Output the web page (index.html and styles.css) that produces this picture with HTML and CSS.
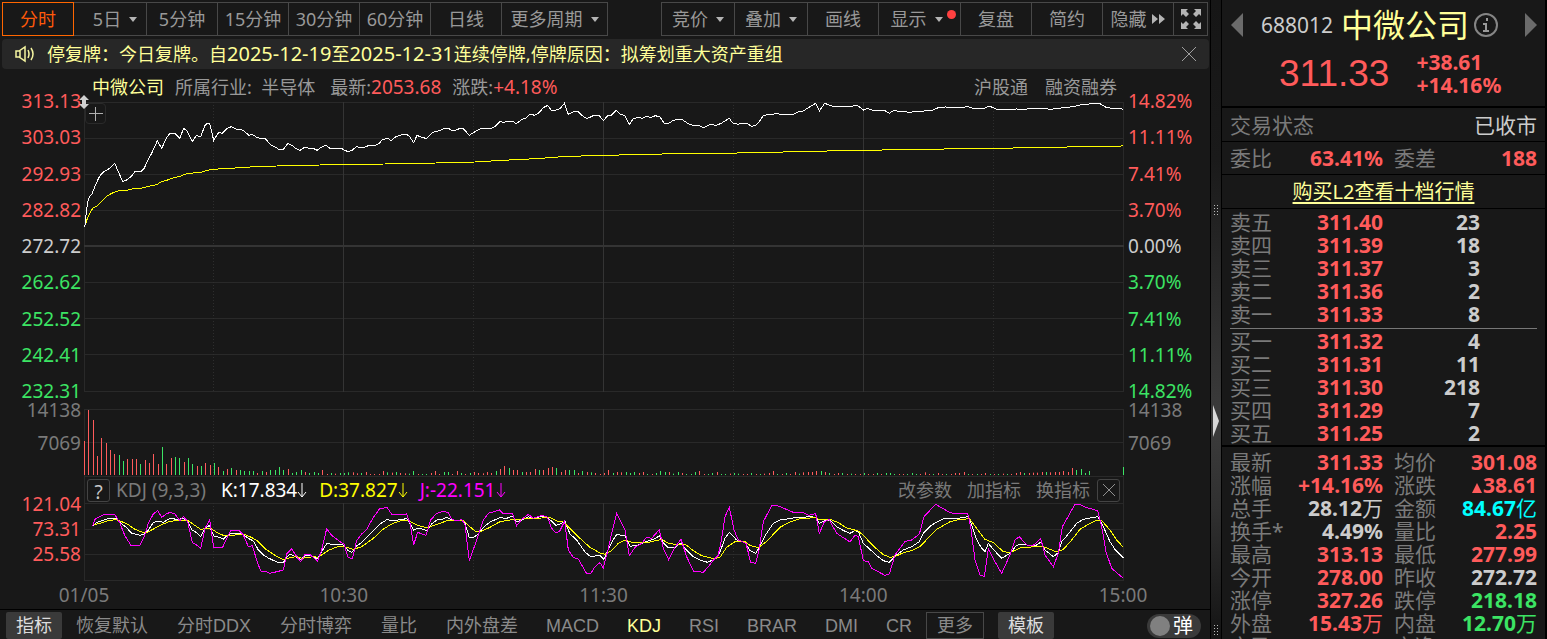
FILE: index.html
```html
<!DOCTYPE html>
<html lang="zh-CN">
<head>
<meta charset="utf-8">
<title>中微公司 688012 分时</title>
<link rel="stylesheet" href="styles.css">
</head>
<body>
<main class="main">
  <nav class="toolbar">
    <div class="group">
      <button class="btn active">分时</button>
      <button class="btn mid days">5日<i class="caret"></i></button>
      <button class="btn">5分钟</button>
      <button class="btn">15分钟</button>
      <button class="btn">30分钟</button>
      <button class="btn">60分钟</button>
      <button class="btn">日线</button>
      <button class="btn wide">更多周期<i class="caret"></i></button>
    </div>
    <div class="group">
      <button class="btn mid">竞价<i class="caret"></i></button>
      <button class="btn mid">叠加<i class="caret"></i></button>
      <button class="btn">画线</button>
      <button class="btn show">显示<i class="caret"></i><i class="dot"></i></button>
      <button class="btn">复盘</button>
      <button class="btn">简约</button>
      <button class="btn hide">隐藏<svg width="14" height="12" viewBox="0 0 14 12"><path d="M0 1l6 5-6 5zM7 1l6 5-6 5z" fill="#b4b4b4"/></svg></button>
      <button class="btn full" aria-label="全屏"><svg width="22" height="22" viewBox="0 0 22 22"><g fill="#b4b4b4"><path d="M1 1h7L6 3l3 3-3 3-3-3-2 2z"/><path d="M21 1v7l-2-2-3 3-3-3 3-3-2-2z"/><path d="M1 21v-7l2 2 3-3 3 3-3 3 2 2z"/><path d="M21 21h-7l2-2-3-3 3-3 3 3 2-2z"/></g></svg></button>
    </div>
  </nav>

  <div class="notice">
    <svg width="20" height="18" viewBox="0 0 20 18" fill="none" stroke="#f5f5a0" stroke-width="1.500"><path d="M1 6h3l6-4v14l-6-4H1zM5 6v6M13 5q2 4 0 8M16 3q4 6 0 12"/></svg>
    <span class="notice-text">停复牌：今日复牌。自<span class="date">2025-12-19</span>至<span class="date">2025-12-31</span>连续停牌,停牌原因：拟筹划重大资产重组</span>
    <button class="plain" aria-label="关闭"><svg width="16" height="16" viewBox="0 0 16 16" stroke="#a0a0a0"><path d="M1 1l14 14M15 1L1 15"/></svg></button>
  </div>

  <div class="info">
    <span class="yellow">中微公司</span>
    <span>所属行业:&nbsp; 半导体</span>
    <span>最新:<b class="red">2053.68</b></span>
    <span>涨跌:<b class="red">+4.18%</b></span>
    <span class="push">沪股通</span>
    <span class="margin-tag">融资融券</span>
  </div>

  <section class="charts">
    <div class="pane">
      <div class="axis left">
        <span class="red">313.13</span><span class="red">303.03</span><span class="red">292.93</span><span class="red">282.82</span><span class="flat">272.72</span><span class="green">262.62</span><span class="green">252.52</span><span class="green">242.41</span><span class="green">232.31</span>
      </div>
      <div class="plot">
        <svg id="price" viewBox="0 0 3120 870" preserveAspectRatio="none"></svg>
        <button class="add" aria-label="添加"><svg width="14" height="14" viewBox="0 0 14 14" stroke="#b0b0b0"><path d="M6.500 0v14M0 6.500h14"/></svg></button>
        <svg class="handle" width="10" height="14" viewBox="0 0 10 14"><path d="M5 0l5 5H7v4h3l-5 5-5-5h3V5H0z" fill="#d0d0d0"/></svg>
      </div>
      <div class="axis right">
        <span class="red">14.82%</span><span class="red">11.11%</span><span class="red">7.41%</span><span class="red">3.70%</span><span class="flat">0.00%</span><span class="green">3.70%</span><span class="green">7.41%</span><span class="green">11.11%</span><span class="green">14.82%</span>
      </div>
    </div>
    <div></div>
    <div class="pane">
      <div class="axis left volume-axis"><span>14138</span><span>7069</span></div>
      <div class="plot"><svg id="volume" viewBox="0 0 3120 204" preserveAspectRatio="none"></svg></div>
      <div class="axis right volume-axis"><span>14138</span><span>7069</span></div>
    </div>
    <div class="kdj-head">
      <button class="box help">?</button>
      <span class="kdj-name">KDJ (9,3,3)</span>
      <span class="k">K:17.834<svg width="10" height="16" viewBox="0 0 10 16"><path d="M5 1v14M1 10l4 5 4-5"/></svg></span>
      <span class="d">D:37.827<svg width="10" height="16" viewBox="0 0 10 16"><path d="M5 1v14M1 10l4 5 4-5"/></svg></span>
      <span class="j">J:-22.151<svg width="10" height="16" viewBox="0 0 10 16"><path d="M5 1v14M1 10l4 5 4-5"/></svg></span>
      <div class="kdj-tools">
        <button class="plain">改参数</button>
        <button class="plain">加指标</button>
        <button class="plain">换指标</button>
        <button class="box" aria-label="关闭指标"><svg width="12" height="12" viewBox="0 0 12 12" stroke="#909090"><path d="M0 0l12 12M12 0L0 12"/></svg></button>
      </div>
    </div>
    <div class="pane">
      <div class="axis left kdj-axis"><span class="red">121.04</span><span class="red">73.31</span><span class="red">25.58</span></div>
      <div class="plot"><svg id="kdj" viewBox="0 0 3120 234" preserveAspectRatio="none"></svg></div>
      <div></div>
    </div>
  </section>

  <div class="times"><span>01/05</span><span>10:30</span><span>11:30</span><span>14:00</span><span>15:00</span></div>

  <nav class="tabs">
    <button class="tab filled">指标</button>
    <button class="tab first">恢复默认</button>
    <button class="tab">分时DDX</button>
    <button class="tab">分时博弈</button>
    <button class="tab">量比</button>
    <button class="tab">内外盘差</button>
    <button class="tab latin">MACD</button>
    <button class="tab latin current">KDJ</button>
    <button class="tab latin">RSI</button>
    <button class="tab latin">BRAR</button>
    <button class="tab latin">DMI</button>
    <button class="tab latin">CR</button>
    <button class="tab outlined">更多</button>
    <button class="tab filled template">模板</button>
    <label class="toggle"><input type="checkbox">弹</label>
  </nav>
</main>

<div class="splitter">
  <i class="grip"></i>
  <svg class="collapse" width="6" height="32" viewBox="0 0 6 32"><path d="M0 0l6 16-6 16z" fill="#d8d8d8"/></svg>
  <i class="grip low"></i>
</div>

<aside class="side">
  <header class="head">
    <div class="title">
      <button class="plain" aria-label="上一个"><svg width="12" height="24" viewBox="0 0 12 24"><path d="M12 0v24L0 12z" fill="#6b6b6b"/></svg></button>
      <span class="code">688012</span>
      <h1 class="name">中微公司</h1>
      <svg width="26" height="26" viewBox="0 0 26 26"><circle cx="13" cy="13" r="11" fill="none" stroke="#858585" stroke-width="2"/><g fill="none" stroke="#999" stroke-width="2"><path d="M14 6v3M10 12h3v6M10 19h6"/></g></svg>
      <button class="plain next" aria-label="下一个"><svg width="12" height="24" viewBox="0 0 12 24"><path d="M0 0l12 12L0 24z" fill="#6b6b6b"/></svg></button>
    </div>
    <div class="quote red">
      <span class="last">311.33</span>
      <span class="change">+38.61<br>+14.16%</span>
    </div>
  </header>
  <div class="line status"><span>交易状态</span><span class="flat">已收市</span></div>
  <div class="line ratio"><span>委比</span><b class="red">63.41%</b><span class="second">委差</span><b class="red">188</b></div>
  <div class="line link"><a href="#l2">购买L2查看十档行情</a></div>
  <div class="book">
    <table>
      <tr><th>卖五</th><td class="red">311.40</td><td>23</td><td></td></tr>
      <tr><th>卖四</th><td class="red">311.39</td><td>18</td><td></td></tr>
      <tr><th>卖三</th><td class="red">311.37</td><td>3</td><td></td></tr>
      <tr><th>卖二</th><td class="red">311.36</td><td>2</td><td></td></tr>
      <tr><th>卖一</th><td class="red">311.33</td><td>8</td><td></td></tr>
    </table>
    <hr>
    <table>
      <tr><th>买一</th><td class="red">311.32</td><td>4</td><td></td></tr>
      <tr><th>买二</th><td class="red">311.31</td><td>11</td><td></td></tr>
      <tr><th>买三</th><td class="red">311.30</td><td>218</td><td></td></tr>
      <tr><th>买四</th><td class="red">311.29</td><td>7</td><td></td></tr>
      <tr><th>买五</th><td class="red">311.25</td><td>2</td><td></td></tr>
    </table>
  </div>
  <div class="stats">
    <table>
      <tr><th>最新</th><td class="red">311.33</td><th>均价</th><td class="red">301.08</td></tr>
      <tr><th>涨幅</th><td class="red">+14.16%</td><th>涨跌</th><td class="red"><i class="up"></i>38.61</td></tr>
      <tr><th>总手</th><td>28.12<span>万</span></td><th>金额</th><td class="cyan">84.67<span>亿</span></td></tr>
      <tr><th>换手*</th><td>4.49%</td><th>量比</th><td class="red">2.25</td></tr>
      <tr><th>最高</th><td class="red">313.13</td><th>最低</th><td class="red">277.99</td></tr>
      <tr><th>今开</th><td class="red">278.00</td><th>昨收</th><td>272.72</td></tr>
      <tr><th>涨停</th><td class="red">327.26</td><th>跌停</th><td class="green">218.18</td></tr>
      <tr><th>外盘</th><td class="red">15.43<span>万</span></td><th>内盘</th><td class="green">12.70<span>万</span></td></tr>
      <tr><th>市盈</th><td></td><th>市净</th><td></td></tr>
    </table>
  </div>
</aside>
<script src="charts.js"></script>
</body>
</html>
```
FILE: styles.css
```css
* { box-sizing: border-box; }
body {
  margin: 0;
  height: 100vh;
  overflow: hidden;
  display: grid;
  grid-template-columns: minmax(0, 1fr) 12px 325px;
  background: #181818;
  color: #999;
  font: 18px/24px "Noto Sans", "Noto Sans CJK SC", sans-serif;
  white-space: nowrap;
}
button {
  margin: 0;
  padding: 0;
  background: none;
  border: 0;
  color: inherit;
  font: inherit;
  white-space: nowrap;
}
svg { display: block; flex: none; }
b { font-weight: 400; }
.red { color: #ff5b5b; }
.green { color: #3ce464; }
.flat { color: #ccc; }
.cyan { color: #00ffff; }
.yellow { color: #ffff99; }

.main { display: flex; flex-direction: column; min-width: 0; height: 100vh; }
.toolbar { display: flex; justify-content: space-between; padding: 2px 2px 3px; }
.group { display: flex; }
.btn {
  display: flex;
  align-items: center;
  justify-content: center;
  gap: 8px;
  width: 72px;
  height: 34px;
  border: 1px solid #484848;
}
.btn + .btn { margin-left: -1px; }
.btn.active { position: relative; border-color: #f60; color: #ff5a0a; }
.mid { width: 74px; }
.days { padding-left: 10px; }
.wide { width: 107px; }
.show { position: relative; width: 83px; padding-right: 6px; }
.hide { gap: 5px; }
.full { width: 35px; }
.caret { border: 4px solid transparent; border-top: 5px solid #b4b4b4; border-bottom: 0; }
.dot { position: absolute; top: 7px; right: 4px; width: 9px; height: 9px; border-radius: 50%; background: #ff4040; }

.notice {
  display: flex;
  align-items: center;
  gap: 12px;
  height: 30px;
  margin: 0 1px 0 2px;
  padding: 0 12px 0 13px;
  border-radius: 4px;
  background: #272727;
  color: #ffff99;
}
.notice-text { flex: 1; }
.date { font-size: 20px; }

.info { display: flex; align-items: center; height: 33px; padding: 2px 93px 0 92px; gap: 11px; }
.info b { font-size: 19px; }
.info span:nth-child(3) { margin-left: 4px; }
.info .push { margin-left: auto; }
.margin-tag { margin-left: 6px; }

.charts { flex: 1; min-height: 0; display: grid; grid-template-rows: 290fr 17px 68fr 26px 78fr; }
.pane { display: grid; grid-template-columns: 84px minmax(0, 1fr) 87px; min-height: 0; }
.plot { position: relative; min-height: 0; margin-right: -1px; }
.plot > svg:first-child { position: absolute; inset: 0; width: 100%; height: 100%; }
.axis {
  display: flex;
  flex-direction: column;
  justify-content: space-between;
  margin: -12px 0 -11px;
  font-size: 19px;
}
.pane:first-child .axis { margin: -13px 0 -11px; }
.left { align-items: flex-end; padding-right: 3px; }
.right { padding-left: 5px; }
.pane .volume-axis { justify-content: flex-start; gap: 9px; margin-top: -11px; color: #7a7a7a; }
.pane .kdj-axis { justify-content: flex-start; gap: 1px; margin-top: -11px; }
.add {
  position: absolute;
  left: 1px;
  top: 1px;
  display: grid;
  place-items: center;
  width: 21px;
  height: 21px;
  border: 1px solid #2a2a2a;
  border-radius: 4px;
}
.handle { position: absolute; left: -5px; top: -7px; }

.kdj-head {
  display: flex;
  align-items: center;
  margin: 0 86px 0 84px;
  padding: 0 3px;
  border: solid #292929;
  border-width: 0 1px;
  color: #7a7a7a;
  font-size: 19px;
}
.box {
  display: grid;
  place-items: center;
  width: 23px;
  height: 23px;
  border: 1px solid #444;
  border-radius: 3px;
}
.help { color: #c8c8c8; margin-left: -1px; }
.kdj-name { margin: 0 15px 0 6px; }
.k, .d, .j { display: flex; align-items: center; margin-right: 12px; }
.k { color: #fff; }
.d { color: #ff0; }
.j { color: #f0f; }
.kdj-head span svg { fill: none; stroke: currentColor; }
.kdj-tools { display: flex; align-items: center; gap: 15px; margin-left: auto; font-size: 18px; }
.kdj-tools .box { margin-left: -8px; }

.times {
  display: flex;
  justify-content: space-between;
  height: 28px;
  margin: 0 57px 0 54px;
  font-size: 19px;
  line-height: 28px;
  color: #7a7a7a;
}
.times span { width: 60px; text-align: center; }

.tabs {
  display: flex;
  align-items: center;
  height: 30px;
  padding: 2px 9px 0 6px;
  border-top: 1px solid #000;
  font-family: "Liberation Sans", "Noto Sans CJK SC", sans-serif;
  color: #8a8a8a;
}
.tab { height: 27px; padding: 0 14px 0 15px; }
.first, .latin { padding: 0 14px; }
.filled, .outlined { padding: 0 10px; }
.filled { background: #3a3a3a; color: #ddd; border-radius: 2px; }
.outlined { border: 1px solid #484848; }
.template { margin-left: 14px; }
.current { color: #ffff99; }
.toggle {
  display: flex;
  align-items: center;
  gap: 3px;
  height: 24px;
  width: 54px;
  margin-left: auto;
  padding-left: 3px;
  border-radius: 12px;
  background: #3a3a3a;
  color: #fff;
  font-size: 20px;
}
.toggle input { appearance: none; width: 20px; height: 20px; margin: 0; border-radius: 50%; background: #808080; }

.splitter {
  position: relative;
  border: solid #000;
  border-width: 0 1px;
  background: linear-gradient(#161616, #1a1a1a 25%, #3c3c3c 66%, #303030 80%, #141414);
}
.grip {
  position: absolute;
  left: 2px;
  top: 204px;
  width: 6px;
  height: 12px;
  background: radial-gradient(circle, #bbb 1px, transparent 1px) 0 0 / 3px 3px;
}
.low { top: auto; bottom: 3px; }
.collapse { position: absolute; left: 2px; top: 405px; }

.side { height: 100vh; overflow: hidden; border-right: 2px solid #000; font-size: 21px; color: #7a7a7a; }
.head { padding: 4px 8px 4px 9px; border-bottom: 2px solid #000; }
.title { display: flex; align-items: center; height: 42px; }
.code { margin: 0 8px 0 18px; color: #ccc; }
.name { margin: 0 4px 0 0; font-size: 32px; line-height: 42px; font-weight: 400; color: #ffff99; }
.next { margin-left: auto; }
.quote { display: flex; align-items: center; height: 56px; padding-left: 48px; gap: 27px; }
.last { font-family: "Liberation Sans", sans-serif; font-size: 37px; line-height: 42px; }
.change { font-weight: 700; line-height: 23px; }
.line { display: flex; align-items: center; justify-content: space-between; padding: 0 8px; border-bottom: 1px solid #000; }
.status { height: 34px; }
.ratio { height: 33px; display: grid; grid-template-columns: 60px 93px 69px 1fr; }
.ratio b { font-weight: 700; text-align: right; }
.second { padding-left: 11px; }
.link { height: 34px; justify-content: center; font-size: 20px; }
.link a { color: #ffff99; text-underline-offset: 3px; }
.book { padding: 2px 8px 0; border-bottom: 2px solid #000; }
.book hr { margin: 2px 0 1px; border: 0; border-top: 1px solid #777; }
.stats { padding: 4px 8px 0; }
table { width: 100%; border-collapse: collapse; table-layout: fixed; line-height: 23px; }
th { width: 60px; padding: 0; text-align: left; font-weight: 400; }
td { padding: 0; height: 23px; text-align: right; font-weight: 700; color: #ccc; }
td:nth-child(2) { width: 93px; }
.book td:nth-child(3) { width: 97px; }
.stats th:nth-child(3) { width: 64px; padding-left: 11px; }
td span { font-weight: 400; }
td.red { color: #ff5b5b; }
td.green { color: #3ce464; }
td.cyan { color: #00ffff; }
.up { display: inline-block; border: 5px solid transparent; border-top: 0; border-bottom: 10px solid #ff5b5b; margin-right: 1px; }

.grid, .grid-v, .grid-dot, .grid-zero, .curve { fill: none; shape-rendering: crispEdges; vector-effect: non-scaling-stroke; stroke-width: 1px; }
.grid { stroke: #292929; }
.grid-v { stroke: #343434; }
.grid-dot { stroke: #2e2e2e; stroke-dasharray: 1 2; }
.grid-zero { stroke: #343434; stroke-width: 2px; }
.white { stroke: #fff; }
.avg { stroke: #ff0; }
.magenta { stroke: #f0f; }
.bar-up { fill: #ff5b5b; }
.bar-down { fill: #3ce464; }
```
FILE: charts.js
```js
// Every plot uses units of one third of a pixel: 13 units per traded minute.
const NS = "http://www.w3.org/2000/svg";

function add(svg, name, cls, attrs) {
  const el = document.createElementNS(NS, name);
  el.setAttribute("class", cls);
  for (const key in attrs) el.setAttribute(key, attrs[key]);
  svg.appendChild(el);
}

function drawGrid(svg, height, rows) {
  rows.forEach(y => add(svg, "path", "grid", { d: `M0 ${y}H3120` }));
  [1.5, 3118.5].forEach(x => add(svg, "path", "grid", { d: `M${x} 0V${height}` }));
  [778.5, 1558.5, 2338.5].forEach(x => add(svg, "path", "grid-v", { d: `M${x} 0V${height}` }));
  [388.5, 1168.5, 1948.5, 2728.5].forEach(x => add(svg, "path", "grid-dot", { d: `M${x} 0V${height}` }));
}

// Sessions hold [x, y] lists, each with its own origin.
function drawCurve(svg, cls, sessions) {
  const points = sessions.flatMap(([dx, dy, text]) =>
    text.trim().split(/\s+/).map(pair => {
      const [x, y] = pair.split(",").map(Number);
      return `${x + dx},${y + dy}`;
    }));
  add(svg, "polyline", "curve " + cls, { points: points.join(" ") });
}

const price = document.getElementById("price");
drawGrid(price, 870, [1.5, 109.5, 217.5, 325.5, 541.5, 649.5, 757.5, 868.5]);
add(price, "path", "grid-zero", { d: "M0 432H3120" });
drawCurve(price, "avg", [
  [-252, -36, "256,406 262,385 268,372 278,355 291,348 305,334 320,319 335,310 350,304 365,301 385,300 400,296 425,294 450,288 470,284 482,276 500,271 515,265 540,259 560,251 605,246 635,238 690,235 750,231 830,228 960,225 1030,223"],
  [768, -36, "135,222 288,219 404,216 470,212 525,209 590,206 628,203 680,199 770,197 872,194 1015,191 1170,190"],
  [1938, -36, "42,188 222,185 327,182 522,179 705,176 924,173 1056,170 1170,169 1180,166"]
]);
drawCurve(price, "white", [
  [-252, -36, "253,412 256,400 258,375 262,345 265,328 270,318 276,312 283,294 291,275 300,257 310,246 320,241 332,232 344,220 352,238 368,275 378,271 392,261 405,245 425,243 433,234 445,207 455,190 465,168 472,152 485,175 500,143 510,130 524,130 539,145 551,115 561,123 577,154 590,136 602,141 614,108 622,100 629,100 641,151 656,127 666,130 680,116 694,110 710,118 718,117 732,123 747,136 757,133 770,142 783,146 796,146 812,165 824,170 836,178 850,178 864,160 876,166 888,176 900,181 914,172 930,175 940,175 951,181 968,169 978,166 990,175 1025,175"],
  [768, -36, "12,180 24,185 36,181 50,169 60,173 74,172 85,167 105,166 117,161 127,149 143,145 154,152 166,141 178,137 190,133 200,133 208,139 221,158 231,136 240,140 260,146 278,127 290,124 300,122 312,115 325,115 337,122 349,120 358,116 370,116 388,136 400,128 412,121 425,115 453,115 465,109 479,95 492,97 505,94 520,95 529,101 545,89 558,84 570,72 584,76 597,68 610,53 623,46 635,62 646,61 660,56 673,40 685,73 700,65 714,64 725,76 741,86 760,77 778,77 790,92 803,77 815,75 829,61 842,73 855,77 868,103 880,86 895,82 908,85 920,78 932,83 946,77 960,81 972,99 985,101 998,92 1010,88 1025,88 1045,101 1060,106 1075,105 1091,113 1105,106 1115,103 1128,107 1145,99 1168,85"],
  [1938, -36, "8,99 25,103 35,100 50,100 65,109 78,105 90,92 100,77 112,74 130,73 140,70 152,74 190,73 205,65 218,64 235,53 257,40 268,63 284,40 305,48 330,50 365,49 380,45 401,60 411,55 430,61 465,62 478,70 490,62 510,64 540,67 560,64 605,62 625,53 645,51 700,52 712,49 730,55 765,54 778,48 800,58 860,57 888,58 905,54 940,55 960,58 980,56 1000,53 1030,50 1050,45 1085,41 1110,41 1130,53 1150,55 1170,55 1180,59"]
]);

const volume = document.getElementById("volume");
drawGrid(volume, 204, [1.5, 100.5, 202.5]);
// Minute bars: height, followed by r (rise) or g (fall).
const bars = (
  "102r 195r 165r 57r 111r 96r 75r 63r 60g 42g 48r 48r 48r 33g 45r 36r 63r 33r 84g 33r 51r 54g 51g 39r 51g 33g 27r 27g 36r 30r 36g 24r 12g 18r 21g 15r 15g 12g 12g 12g 6r 12g 9r 15g 15g 24g 15g 18r 6g 9g 15g 9r 6g 9g 6g 15r 3r 6g 4r 6g " +
  "6g 8g 8r 5r 6g 9r 3r 3r 3r 12r 8g 7r 9g 6r 5r 4g 12g 3r 3g 3g 6r 12r 3r 9g 9g 3r 12r 6g 3r 6g 9r 6r 5r 9r 6r 12g 18r 27r 21g 15r 15r 9g 9r 9r 18r 15g 15r 21r 24r 21g 9r 15r 15g 15g 6r 12g 9r 8g 6r 3r " +
  "6r 15r 6g 9r 8r 9g 6g 9g 6r 9r 3g 3r 6g 12g 9g 9r 4g 9g 6r 3g 3g 9g 12r 3r 3g 6g 9r 3g 3g 4r " +
  "6g 4g 3r 3r 6g 3r 3g 4r 6r 12r 3g 3r 6g 3r 9r 4g 8r 9r 9r 12r 12g 9r 6g 3r 6r 6g 3r 4g 3r 3r 6g 3r 3r 6g 3r 6g 6g 3g 3r 3r 3g 6g 3g 3r 8r 3r 3g 6r 3r 3g 3r 6r 6r 9r 3g 3r 3g 3r 6r 3g 3r 3g 4r 3g 3r 6r 9r 6g 6r 7r 7r 9r 9g 8r 9r 9r 12r 9r 21r 15g 18g 6g 12g 0g 0g 24g"
).split(" ");
bars.forEach((bar, i) => {
  const h = parseInt(bar, 10);
  add(volume, "rect", bar.endsWith("r") ? "bar-up" : "bar-down", { x: i === bars.length - 1 ? 3117 : Math.round(i * 13 / 3) * 3, y: 198 - h, width: 3, height: h });
});

const kdj = document.getElementById("kdj");
drawGrid(kdj, 234, [1.5, 79.5, 154.5, 232.5]);
drawCurve(kdj, "white", [
  [-252, -369, "280,437 290,428 305,422 325,416 348,416 365,431 380,443 395,460 410,463 420,466 433,463 445,450 460,428 472,423 490,427 510,415 530,418 550,416 563,422 575,449 590,458 602,469 615,446 628,436 641,468 655,471 670,477 680,467 693,460 718,459 732,465 745,475 760,483 775,510 790,525 805,534 820,541 835,548 850,548 860,530 872,522 885,530 902,538 915,527 930,526 940,532 953,536 965,515 980,491 1000,493 1020,493"],
  [768, -129, "12,256 24,272 36,277 50,258 65,247 80,232 100,212 120,192 142,178 155,183 175,180 200,176 210,190 221,211 232,204 245,207 260,212 275,192 290,180 310,177 320,172 335,179 350,183 365,180 375,190 388,233 400,233 415,222 430,202 450,186 480,173 500,175 518,168 530,185 545,180 565,170 580,177 600,170 620,170 635,184 648,196 665,190 675,184 690,222 710,240 735,276 752,290 780,286 792,298 805,268 815,247 830,223 855,228 870,259 900,254 915,246 940,238 958,228 970,248 985,264 1005,262 1023,249 1035,266 1060,290 1085,302 1103,307 1125,297 1140,276 1155,235 1168,217"],
  [1938, -129, "20,240 45,247 60,272 77,280 88,262 105,227 130,190 150,180 190,174 240,170 258,172 268,190 290,180 300,180 320,200 345,214 360,220 375,212 385,215 400,250 420,268 440,287 460,302 478,307 495,288 520,270 545,260 568,245 580,220 605,195 640,176 690,174 715,170 725,195 738,235 755,265 765,275 775,250 790,268 815,295 840,280 860,256 875,252 905,258 920,255 933,246 945,270 970,290 985,278 995,245 1010,228 1040,190 1060,178 1103,170 1120,200 1140,245 1155,268 1180,294"]
]);
drawCurve(kdj, "avg", [
  [-252, -369, "280,435 300,430 325,422 348,419 365,425 385,434 405,448 425,456 440,458 455,450 480,436 510,424 540,421 563,421 580,433 602,448 630,444 655,460 670,466 690,466 732,463 750,470 770,481 795,506 825,526 850,539 875,532 890,530 905,535 940,530 955,532 985,511 1010,501 1020,498"],
  [768, -129, "20,262 40,268 65,260 100,235 130,207 155,192 185,181 205,182 230,195 260,203 285,195 325,181 370,181 385,196 405,213 425,213 450,202 480,185 510,180 530,178 580,175 630,173 650,183 670,186 690,205 720,235 750,262 780,279 795,283 815,272 835,250 855,240 880,248 930,246 965,238 985,250 1010,254 1035,252 1060,272 1085,287 1120,296 1140,292 1160,262"],
  [1938, -129, "15,245 45,245 60,256 85,263 110,244 150,202 180,186 210,176 255,173 265,178 305,180 325,188 350,204 385,213 400,226 430,258 460,284 480,292 495,290 520,278 550,270 570,260 600,228 620,208 660,185 685,179 718,176 740,205 765,238 790,248 820,275 840,278 870,264 935,258 965,270 980,276 1000,268 1025,240 1050,208 1080,190 1100,180 1115,182 1140,210 1160,240 1180,262"]
]);
drawCurve(kdj, "magenta", [
  [-252, -369, "278,437 285,418 310,404 345,404 360,430 375,468 393,496 420,495 433,470 445,430 460,402 473,391 485,412 497,403 510,397 525,402 540,422 550,409 563,425 577,488 590,495 602,506 615,445 629,420 641,502 668,502 680,475 693,450 718,452 730,465 745,500 757,497 770,540 782,573 800,576 810,580 835,574 850,570 860,522 875,506 890,530 902,545 915,523 930,524 953,543 965,510 980,446 995,466 1015,481"],
  [768, -129, "0,245 12,252 24,292 37,296 50,242 65,222 80,208 100,172 120,145 142,143 155,163 200,162 210,190 221,254 233,217 258,226 272,180 290,160 310,154 325,158 335,177 350,183 365,178 375,195 388,302 410,240 430,180 445,160 478,150 490,162 517,160 530,197 545,178 565,163 580,175 605,166 622,171 635,205 648,219 660,212 674,183 685,270 700,292 715,297 740,341 752,341 765,320 780,308 790,324 805,265 815,220 830,160 855,210 868,287 885,262 905,250 920,232 935,235 958,209 970,265 986,299 1005,262 1023,238 1040,290 1060,333 1090,337 1105,320 1120,300 1135,285 1145,235 1155,170 1168,142"],
  [1938, -129, "12,210 25,240 48,250 62,307 77,310 88,265 100,185 125,137 145,138 190,157 220,158 235,166 257,161 268,220 283,185 297,178 320,220 360,246 375,226 385,230 400,302 415,305 425,325 465,346 478,342 495,285 525,244 545,240 568,222 582,170 617,133 660,158 685,162 713,160 722,200 735,300 750,345 763,350 775,265 795,305 815,340 840,285 855,240 868,230 890,255 910,256 932,235 945,285 970,320 985,280 997,200 1035,133 1050,133 1070,143 1103,152 1115,200 1128,275 1145,325 1180,355"]
]);
```
